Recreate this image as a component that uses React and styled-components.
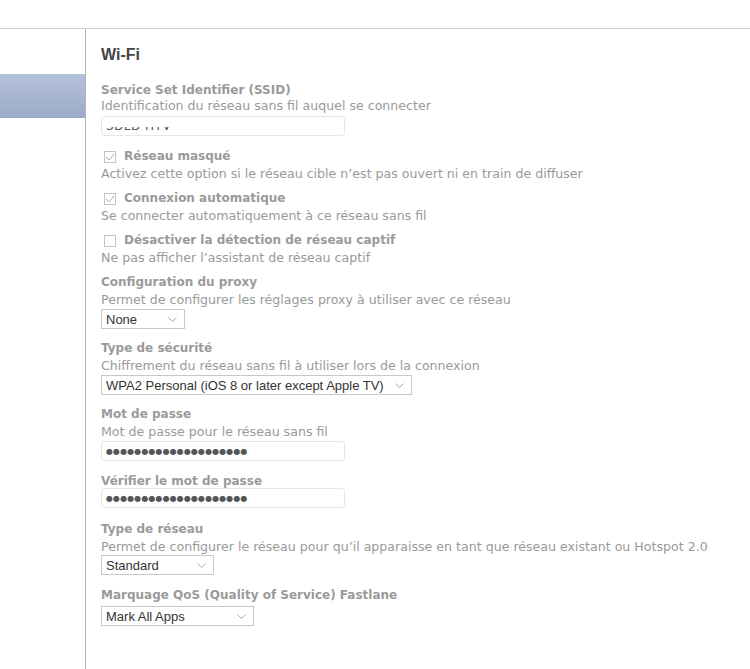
import React from 'react';
import styled, { createGlobalStyle } from 'styled-components';

const GlobalStyle = createGlobalStyle`
  html, body {
    margin: 0;
    padding: 0;
    background: #fff;
  }
  body {
    font-family: "DejaVu Sans", Verdana, sans-serif;
  }
`;

const Page = styled.div`
  width: 750px;
  height: 669px;
  overflow: hidden;
  display: flex;
  flex-direction: column;
`;

const TopBar = styled.div`
  height: 28px;
  border-bottom: 1px solid #cfcfcf;
  flex-shrink: 0;
`;

const Body = styled.div`
  flex: 1;
  display: flex;
`;

const Sidebar = styled.div`
  width: 85px;
  border-right: 1px solid #b4b4b4;
  padding-top: 45px;
  flex-shrink: 0;
`;

const SideItem = styled.div`
  height: 44px;
  background: ${(p) => (p.active ? 'linear-gradient(#b4c1da, #9babc7)' : 'transparent')};
`;

const Content = styled.div`
  flex: 1;
  padding: 16px 0 0 15px;
  font-size: 12px;
  color: #999;
`;

const Title = styled.h1`
  margin: 0 0 17px;
  font-size: 16px;
  font-weight: bold;
  color: #444;
  line-height: 20px;
  font-family: "Liberation Sans", Arial, sans-serif;
`;

const Field = styled.div`
  margin-bottom: ${(p) => p.gap ?? 8}px;
`;

const Label = styled.div`
  font-weight: bold;
  line-height: 17px;
  color: #9a9a9a;
  display: flex;
  align-items: center;
`;

const Desc = styled.div`
  line-height: 17px;
  font-size: 12.6px;
  color: #9a9a9a;
  margin-top: ${(p) => p.mt ?? 0}px;
`;

const TextBox = styled.div`
  width: 244px;
  height: 20px;
  box-sizing: border-box;
  border: 1px solid #e6e6e6;
  border-radius: 3px;
  margin-top: ${(p) => p.mt ?? 1}px;
  overflow: hidden;
  color: #555;
  padding-left: 4px;
  display: flex;
  align-items: center;
`;

// the SSID value only shows the lower half of its glyphs
const Clipped = styled.span`
  font-size: 12px;
  line-height: 12px;
  color: #555;
  letter-spacing: 0.5px;
  clip-path: inset(58% 0 0 0);
`;

const Dots = styled.span`
  font-size: 8px;
  letter-spacing: 0.1px;
  color: #555;
`;

const Select = styled.div`
  width: ${(p) => p.w}px;
  height: 20px;
  box-sizing: border-box;
  border: 1px solid #c8c8c8;
  margin-top: ${(p) => p.mt ?? 1}px;
  display: flex;
  align-items: center;
  justify-content: space-between;
  padding: 0 7px 0 4px;
  color: #333;
  font-family: "Liberation Sans", Arial, sans-serif;
  font-size: 13px;
`;

const Box = styled.span`
  width: 12px;
  height: 12px;
  box-sizing: border-box;
  border: 1px solid #c4c4c4;
  margin: 0 8px 0 3px;
  display: inline-flex;
  align-items: center;
  justify-content: center;
`;

const Chevron = () => (
  <svg width="9" height="5" viewBox="0 0 9 5">
    <path d="M0.5 0.5 L4.5 4.5 L8.5 0.5" fill="none" stroke="#aaa" strokeWidth="1" />
  </svg>
);

const Check = ({ checked }) => (
  <Box>
    {checked && (
      <svg width="10" height="8" viewBox="0 0 10 8">
        <path d="M1 4 L4 7 L9 1" fill="none" stroke="#aaa" strokeWidth="1" />
      </svg>
    )}
  </Box>
);

const DropDown = ({ w, mt, children }) => (
  <Select w={w} mt={mt}>
    <span>{children}</span>
    <Chevron />
  </Select>
);

export default function App() {
  const dots = '●'.repeat(20);
  return (
    <Page>
      <GlobalStyle />
      <TopBar />
      <Body>
        <Sidebar>
          <SideItem active />
        </Sidebar>
        <Content>
          <Title>Wi-Fi</Title>
          <Field gap={12}>
            <Label>Service Set Identifier (SSID)</Label>
            <Desc mt={-2}>Identification du réseau sans fil auquel se connecter</Desc>
            <TextBox mt={2}>
              <Clipped>SDLD HTV</Clipped>
            </TextBox>
          </Field>
          <Field gap={8}>
            <Label>
              <Check checked />
              Réseau masqué
            </Label>
            <Desc>Activez cette option si le réseau cible n’est pas ouvert ni en train de diffuser</Desc>
          </Field>
          <Field gap={8}>
            <Label>
              <Check checked />
              Connexion automatique
            </Label>
            <Desc>Se connecter automatiquement à ce réseau sans fil</Desc>
          </Field>
          <Field gap={8}>
            <Label>
              <Check />
              Désactiver la détection de réseau captif
            </Label>
            <Desc>Ne pas afficher l’assistant de réseau captif</Desc>
          </Field>
          <Field gap={11}>
            <Label>Configuration du proxy</Label>
            <Desc>Permet de configurer les réglages proxy à utiliser avec ce réseau</Desc>
            <DropDown w={84}>None</DropDown>
          </Field>
          <Field gap={11}>
            <Label>Type de sécurité</Label>
            <Desc>Chiffrement du réseau sans fil à utiliser lors de la connexion</Desc>
            <DropDown w={311}>WPA2 Personal (iOS 8 or later except Apple TV)</DropDown>
          </Field>
          <Field gap={12}>
            <Label>Mot de passe</Label>
            <Desc>Mot de passe pour le réseau sans fil</Desc>
            <TextBox>
              <Dots>{dots}</Dots>
            </TextBox>
          </Field>
          <Field gap={13}>
            <Label>Vérifier le mot de passe</Label>
            <TextBox mt={-2}>
              <Dots>{dots}</Dots>
            </TextBox>
          </Field>
          <Field gap={12}>
            <Label>Type de réseau</Label>
            <Desc>Permet de configurer le réseau pour qu’il apparaisse en tant que réseau existant ou Hotspot 2.0</Desc>
            <DropDown w={113} mt={0}>Standard</DropDown>
          </Field>
          <Field>
            <Label>Marquage QoS (Quality of Service) Fastlane</Label>
            <DropDown w={153} mt={2}>Mark All Apps</DropDown>
          </Field>
        </Content>
      </Body>
    </Page>
  );
}
